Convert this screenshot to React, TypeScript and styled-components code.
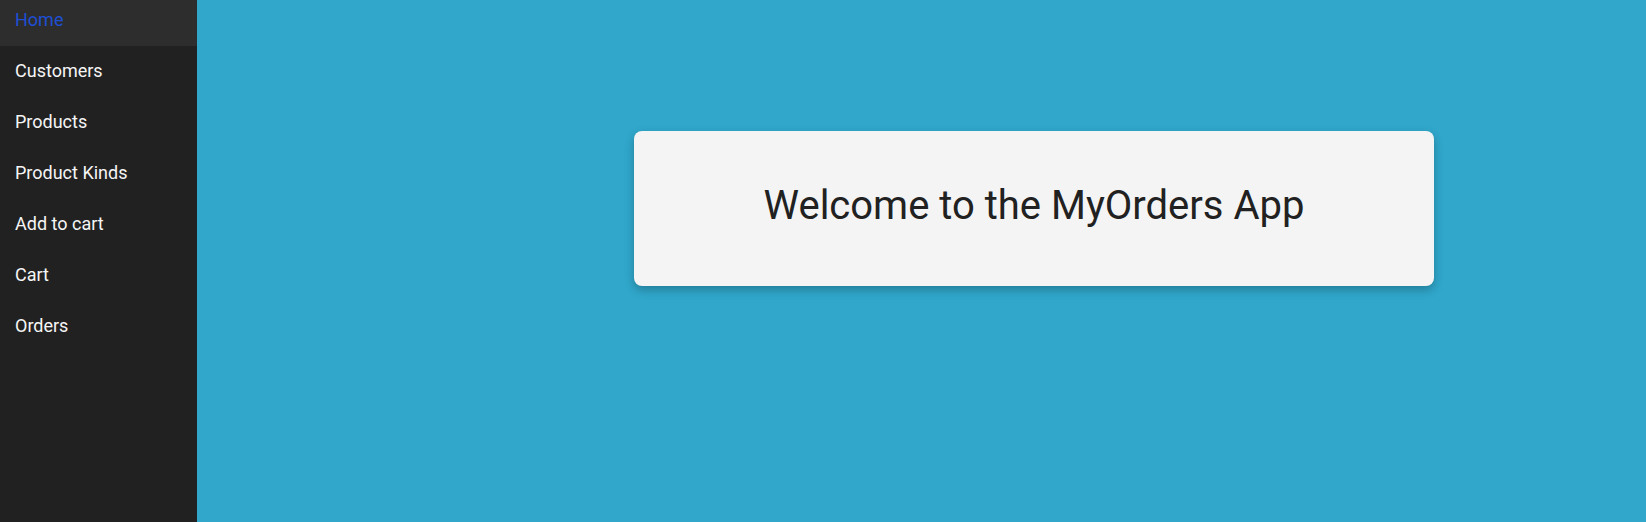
import React from "react";
import styled, { createGlobalStyle } from "styled-components";

const GlobalStyle = createGlobalStyle`
  html, body { margin: 0; padding: 0; height: 100%; }
  body { font-family: Roboto, "Noto Sans", Arial, sans-serif; background: #30a7cb; }
  #root { height: 100%; }
`;

const Layout = styled.div`
  display: flex;
  height: 522px;
  overflow: hidden;
`;

const Sidebar = styled.nav`
  width: 197px;
  flex: none;
  background: #212121;
  display: flex;
  flex-direction: column;
  margin-top: -5px;
`;

const NavItem = styled.a<{ $active?: boolean }>`
  display: flex;
  align-items: center;
  height: 51px;
  padding: 0 15px 3px;
  box-sizing: border-box;
  font-size: 18px;
  color: ${(p) => (p.$active ? "#1e4fd4" : "#f5f5f5")};
  background: ${(p) => (p.$active ? "#2d2d2d" : "transparent")};
  text-decoration: none;
  cursor: pointer;
`;

const Main = styled.main`
  flex: 1;
  background: #30a7cb;
  display: flex;
  align-items: flex-start;
  padding: 131px 0 0 437px;
`;

const Card = styled.section`
  width: 800px;
  height: 155px;
  box-sizing: border-box;
  background: #f4f4f4;
  border-radius: 8px;
  box-shadow: 0 4px 10px rgba(0, 0, 0, 0.25);
  display: flex;
  align-items: center;
  justify-content: center;
  padding-bottom: 6px;
`;

const Title = styled.h1`
  margin: 0;
  font-size: 40px;
  font-weight: 400;
  color: #212121;
`;

const items = ["Home", "Customers", "Products", "Product Kinds", "Add to cart", "Cart", "Orders"];

export default function App() {
  return (
    <>
      <GlobalStyle />
      <Layout>
        <Sidebar>
          {items.map((it, i) => (
            <NavItem key={it} $active={i === 0}>
              {it}
            </NavItem>
          ))}
        </Sidebar>
        <Main>
          <Card>
            <Title>Welcome to the MyOrders App</Title>
          </Card>
        </Main>
      </Layout>
    </>
  );
}
